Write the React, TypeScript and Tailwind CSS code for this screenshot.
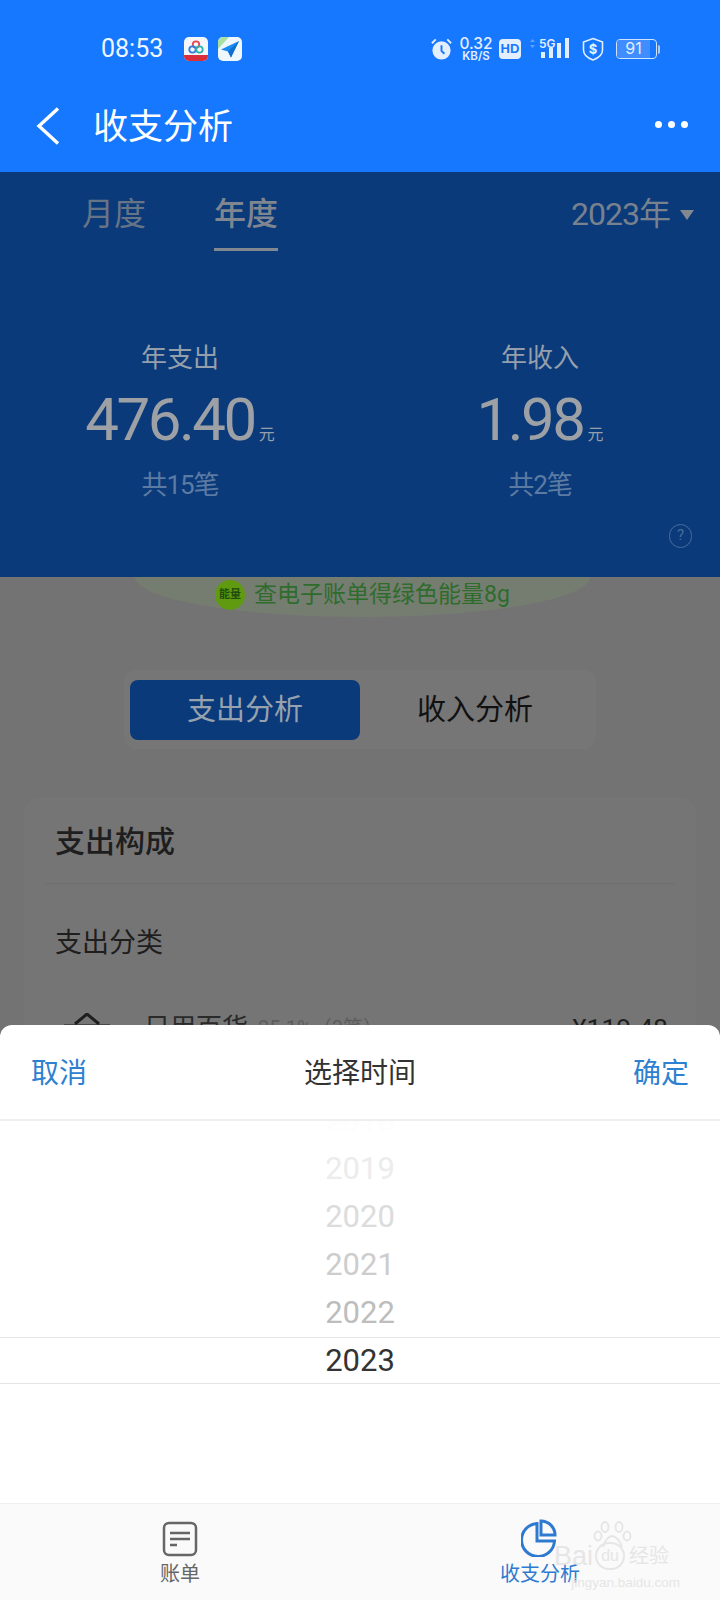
const CJK = "font-['Roboto','Noto_Sans_CJK_SC',sans-serif]";

function AppIcons() {
  return (
    <div className="flex gap-[9px]">
      <svg width="24" height="24" viewBox="0 0 24 24">
        <rect width="24" height="24" rx="5" fill="#f4f6fb" />
        <path d="M0 18h24v1a5 5 0 0 1-5 5H5a5 5 0 0 1-5-5z" fill="#d92f3a" />
        <circle cx="12" cy="7.5" r="3.2" fill="none" stroke="#e5484d" strokeWidth="1.8" />
        <circle cx="8.5" cy="12.5" r="3.2" fill="none" stroke="#2f7fe0" strokeWidth="1.8" />
        <circle cx="15.5" cy="12.5" r="3.2" fill="none" stroke="#2bb3a8" strokeWidth="1.8" />
      </svg>
      <svg width="24" height="24" viewBox="0 0 24 24" className="ml-px">
        <rect width="24" height="24" rx="5" fill="#eef7fb" />
        <path d="M0 5a5 5 0 0 1 5-5h6L0 12z" fill="#a7e0a0" />
        <path d="M21 4 3 12.5l7 2 3 6z" fill="#1a8cf0" />
        <path d="M21 4 10 14.5l3 6z" fill="#0f6fd0" />
      </svg>
    </div>
  );
}

function StatusRight() {
  return (
    <div className="flex items-center text-[#e3eeff]">
      <svg width="23" height="24" viewBox="0 0 24 24" className="mr-[6px]">
        <circle cx="12" cy="13.5" r="9.5" fill="#e3eeff" />
        <path d="M12 8v6l3 3" fill="none" stroke="#1677ff" strokeWidth="2" />
        <path d="M2 6l4-4M22 6l-4-4" stroke="#e3eeff" strokeWidth="2" />
      </svg>
      <div className="w-[34px] flex flex-col items-center font-['Inter',sans-serif] font-medium mr-[6px]">
        <span className="text-[15.5px] leading-[14px]">0.32</span>
        <span className="text-[11.5px] leading-[11px] font-semibold">KB/S</span>
      </div>
      <div className="w-[22px] h-[20px] rounded-[4px] bg-[#e3eeff] text-[#1677ff] text-[13px] leading-[20px] text-center font-bold font-['Liberation_Sans',sans-serif] mr-[9px]">
        HD
      </div>
      <svg width="40" height="24" viewBox="0 0 40 24" className="mr-[12px]">
        <path d="M0 5l2.500-3 2.500 3zM0 8l2.500 3 2.500-3z" fill="#5ea2ff" />
        <text x="9" y="11" fontSize="12" fontWeight="600" fill="#e3eeff" fontFamily="Inter">5G</text>
        <rect x="11" y="15" width="4" height="6" fill="#e3eeff" />
        <rect x="19" y="11" width="4" height="10" fill="#e3eeff" />
        <rect x="27" y="6" width="4" height="15" fill="#e3eeff" />
        <rect x="35" y="1" width="4" height="20" fill="#e3eeff" />
      </svg>
      <svg width="22" height="24" viewBox="0 0 22 24" className="mr-[12px]">
        <path d="M11 1.500 20.500 5v8c0 5-4 8-9.500 10C5.500 21 1.500 18 1.500 13V5z" fill="none" stroke="#e3eeff" strokeWidth="1.600" />
        <text x="11" y="17" textAnchor="middle" fontSize="13" fontWeight="700" fill="#e3eeff" fontFamily="Inter">$</text>
      </svg>
      <div className="flex items-center">
        <div className="w-[41px] h-[20px] rounded-[4px] border-[1.5px] border-[#cfe2ff] relative overflow-hidden">
          <div className="w-[33px] h-full bg-[#3f8dff] text-[16px] leading-[17px] text-center font-['Inter',sans-serif] text-[#e3eeff]">91</div>
        </div>
        <div className="w-[2px] h-[9px] ml-[1px] bg-[#a9cbff] rounded-r" />
      </div>
    </div>
  );
}

function Stat({ title, num, count }: { title: string; num: string; count: string }) {
  return (
    <div className="flex flex-col items-center">
      <div className="mt-px text-[26px] leading-[36px] text-[#959fab]">{title}</div>
      <div className="mt-[9px] flex items-baseline h-[70px] leading-[70px] text-[#9da1a6]">
        <span className="text-[60px] tracking-[-2.5px]">{num}</span>
        <span className="text-[16px] ml-[4px] text-[#959fab]">元</span>
      </div>
      <div className="mt-[12px] text-[26px] leading-[36px] tracking-[-1px] text-[#5c7ba3]">{count}</div>
    </div>
  );
}

const YEARS = [
  { y: "2018", c: "text-[#fdfdfd]" },
  { y: "2019", c: "text-[#ececec]" },
  { y: "2020", c: "text-[#dcdcdc]" },
  { y: "2021", c: "text-[#cdcdcd]" },
  { y: "2022", c: "text-[#bdbdbd]" },
];

export default function App() {
  return (
    <div className={`w-[720px] h-[1600px] flex flex-col overflow-hidden relative bg-[#737373] ${CJK}`}>
      {/* App bar */}
      <div className="h-[172px] shrink-0 bg-[#1677ff] flex flex-col text-white">
        <div className="mt-[37px] h-[24px] flex items-center pl-[101px] pr-[60px]">
          <span className="text-[25px] leading-[24px] text-[#f0f6ff] w-[83px]">08:53</span>
          <AppIcons />
          <div className="flex-1" />
          <StatusRight />
        </div>
        <div className="mt-[40px] h-[50px] flex items-center pl-[36px] pr-[32px]">
          <svg width="24" height="38" viewBox="0 0 24 38" className="mr-[33px]">
            <path d="M22 1.500 3 19l19 17.500" fill="none" stroke="#fff" strokeWidth="3.400" />
          </svg>
          <span className="mt-[4px] text-[35px] leading-[50px] text-white">收支分析</span>
          <div className="flex-1" />
          <div className="flex gap-[6px] -mt-[4px]">
            <div className="w-[7px] h-[7px] rounded-full bg-white" />
            <div className="w-[7px] h-[7px] rounded-full bg-white" />
            <div className="w-[7px] h-[7px] rounded-full bg-white" />
          </div>
        </div>
      </div>

      {/* Dimmed blue summary */}
      <div className="h-[405px] shrink-0 bg-[#0a3a7a] flex flex-col">
        <div className="h-[80px] flex items-start pt-[21px] pl-[82px] pr-[26px]">
          <div className="text-[32px] leading-[42px] text-[#667486]">月度</div>
          <div className="ml-[68px] flex flex-col">
            <div className="text-[32px] leading-[42px] font-medium text-[#7f868f]">年度</div>
            <div className="mt-[13px] h-[3px] bg-[#82888f]" />
          </div>
          <div className="flex-1" />
          <div className="text-[32px] leading-[42px] tracking-[-1px] text-[#78818d]">2023年</div>
          <div className="ml-[10px] mt-[17px] w-0 h-0 border-x-[7px] border-x-transparent border-t-[10px] border-t-[#82888f]" />
        </div>
        <div className="mt-[87px] grid grid-cols-2">
          <Stat title="年支出" num="476.40" count="共15笔" />
          <Stat title="年收入" num="1.98" count="共2笔" />
        </div>
        <div className="mt-[21px] flex justify-end pr-[28px]">
          <div className="w-[23px] h-[24px] rounded-full border-[1.5px] border-[#4a6c9a] text-[#4a6c9a] text-[15px] leading-[21px] text-center">?</div>
        </div>
      </div>

      {/* Dimmed page */}
      <div className="h-[448px] shrink-0 overflow-hidden flex flex-col bg-[#737373]">
        <div className="shrink-0 ml-[135px] w-[455px] h-[40px] pb-[4px] [border-bottom-left-radius:50%_100%] [border-bottom-right-radius:50%_100%] bg-[#757d71] flex items-center justify-center">
          <div className="w-[30px] h-[30px] rounded-full bg-[#5f9a10] text-[#1f4f0c] text-[11px] leading-[30px] text-center font-bold shrink-0">能量</div>
          <span className="ml-[9px] text-[23px] leading-[32px] text-[#2e6c2c] whitespace-nowrap">查电子账单得绿色能量8g</span>
        </div>

        <div className="shrink-0 mt-[53px] ml-[124px] w-[472px] h-[79px] rounded-xl bg-[#767676] pt-[10px] pl-[6px] pr-[6px] flex items-start">
          <div className="w-[230px] h-[60px] rounded-lg bg-[#0a3a7a] text-[#98a2ae] text-[29px] leading-[60px] text-center">支出分析</div>
          <div className="flex-1 text-[#111] text-[29px] leading-[60px] text-center">收入分析</div>
        </div>

        <div className="shrink-0 mt-[48px] mx-[24px] h-[260px] rounded-t-2xl bg-[#757575] flex flex-col">
          <div className="shrink-0 mt-[25px] pl-[31px] text-[30px] leading-[40px] font-medium text-[#1e1e1e]">支出构成</div>
          <div className="shrink-0 mt-[21px] mx-[21px] h-px bg-[#6f6f6f]" />
          <div className="shrink-0 mt-[41px] pl-[31px] text-[27px] leading-[36px] text-[#1e1e1e]">支出分类</div>
          <div className="shrink-0 mt-[49px] flex items-start pl-[40px] pr-[28px]">
            <svg width="46" height="24" viewBox="0 0 46 24" className="mt-[3px] shrink-0">
              <path d="M11 11 23 1l12 10" fill="none" stroke="#1e1e1e" strokeWidth="3" />
              <path d="M0 13h46" stroke="#1e1e1e" strokeWidth="3" />
            </svg>
            <span className="ml-[34px] text-[26px] leading-[36px] text-[#2a2a2a]">日用百货</span>
            <span className="ml-[10px] text-[20px] leading-[36px] text-[#5c5c5c]">25.1%（3笔）</span>
            <div className="flex-1" />
            <span className="text-[26.5px] leading-[36px] text-[#1e1e1e]">¥119.48</span>
          </div>
        </div>
      </div>

      {/* Sheet */}
      <div className="h-[478px] shrink-0 rounded-t-xl bg-white flex flex-col">
        <div className="h-[96px] shrink-0 border-b-2 border-[#eeeeee] flex items-center justify-between px-[31px] pt-[4px]">
          <span className="text-[28px] leading-[38px] text-[#2e80d0]">取消</span>
          <span className="text-[28px] leading-[38px] text-[#333]">选择时间</span>
          <span className="text-[28px] leading-[38px] text-[#2e80d0]">确定</span>
        </div>
        <div className="flex-1 overflow-hidden flex flex-col">
          <div className="shrink-0 -mt-[24px]">
            {YEARS.map((r) => (
              <div key={r.y} className={`h-[48px] text-[31px] leading-[48px] text-center ${r.c}`}>{r.y}</div>
            ))}
          </div>
          <div className="shrink-0 h-[47px] border-y border-[#e6e6e6] text-[31px] leading-[45px] text-center text-[#333]">2023</div>
        </div>
      </div>

      {/* Tab bar */}
      <div className="flex-1 border-t border-[#eeeeee] bg-[#fafafa] relative flex">
        <div className="w-[360px] flex flex-col items-center pt-[17px]">
          <svg width="36" height="36" viewBox="0 0 36 36">
            <rect x="2" y="2" width="32" height="32" rx="5" fill="none" stroke="#666" strokeWidth="2.500" />
            <path d="M8 12h20M8 18h20M8 24h7" stroke="#666" strokeWidth="2.500" />
          </svg>
          <span className="mt-[3px] text-[20px] leading-[28px] text-[#666]">账单</span>
        </div>
        <div className="w-[360px] flex flex-col items-center pt-[15px]">
          <svg width="38" height="38" viewBox="0 0 38 38">
            <path d="M16 4.500a16.500 16.500 0 1 0 17.500 17.500H16z" fill="none" stroke="#2e7ad0" strokeWidth="3" />
            <path d="M20 2a14 14 0 0 1 14 14H20z" fill="none" stroke="#2e7ad0" strokeWidth="3" />
          </svg>
          <span className="mt-[3px] text-[20px] leading-[28px] text-[#2e7ad0]">收支分析</span>
        </div>
        {/* Watermark */}
        <div className="absolute left-[554px] top-[17px] w-[126px] flex flex-col items-center text-[#e6e6e6] pointer-events-none">
          <svg width="40" height="30" viewBox="0 0 40 30" className="ml-[-8px]">
            <g fill="none" stroke="#e6e6e6" strokeWidth="2">
              <ellipse cx="12" cy="6" rx="3.500" ry="5" />
              <ellipse cx="26" cy="6" rx="3.500" ry="5" />
              <ellipse cx="5" cy="15" rx="3.500" ry="4.500" />
              <ellipse cx="34" cy="15" rx="3.500" ry="4.500" />
              <path d="M10 26c2-7 6-11 9-11s8 4 10 11" />
            </g>
          </svg>
          <div className="flex items-center -mt-[9px] w-full">
            <span className="text-[27px] leading-[28px] font-['Liberation_Sans',sans-serif]">Bai</span>
            <span className="mx-[2px] w-[30px] h-[28px] rounded-full border-2 border-[#e6e6e6] text-[16px] leading-[24px] text-center font-['Liberation_Sans',sans-serif]">du</span>
            <span className="ml-[2px] text-[20px] leading-[28px] whitespace-nowrap">经验</span>
          </div>
          <span className="mt-[6px] w-full text-right text-[13.5px] leading-[14px] font-['Liberation_Sans',sans-serif] whitespace-nowrap">jingyan.baidu.com</span>
        </div>
      </div>
    </div>
  );
}
